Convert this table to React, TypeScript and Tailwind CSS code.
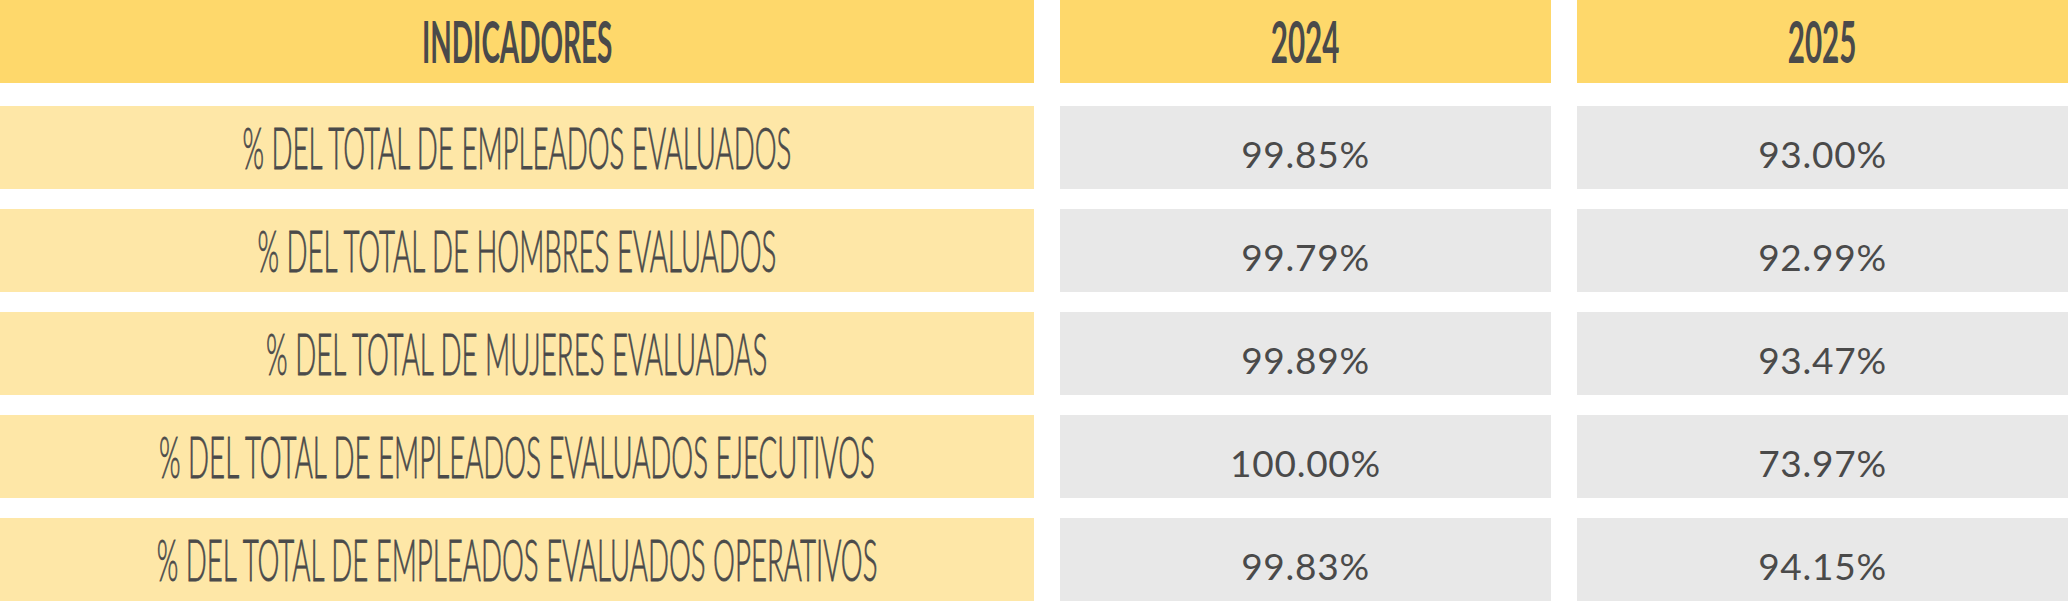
const rows = [
  { label: "% DEL TOTAL DE EMPLEADOS EVALUADOS", y2024: "99.85%", y2025: "93.00%" },
  { label: "% DEL TOTAL DE HOMBRES EVALUADOS", y2024: "99.79%", y2025: "92.99%" },
  { label: "% DEL TOTAL DE MUJERES EVALUADAS", y2024: "99.89%", y2025: "93.47%" },
  { label: "% DEL TOTAL DE EMPLEADOS EVALUADOS EJECUTIVOS", y2024: "100.00%", y2025: "73.97%" },
  { label: "% DEL TOTAL DE EMPLEADOS EVALUADOS OPERATIVOS", y2024: "99.83%", y2025: "94.15%" },
];

const cond = "font-['Lato',sans-serif] text-[57px] leading-none whitespace-nowrap inline-block";

function HeaderCell({ children, wide }: { children: string; wide?: boolean }) {
  return (
    <div className="h-[83px] bg-[#fed86b] flex items-center justify-center overflow-hidden">
      <span className={`${cond} font-bold ${wide ? "scale-x-[0.49]" : "scale-x-[0.52]"}`}>{children}</span>
    </div>
  );
}

function ValueCell({ value }: { value: string }) {
  return (
    <div className="h-[83px] bg-[#e8e8e8] flex items-center justify-center pt-[12px]">
      <span className="font-['Lato',sans-serif] text-[37px] leading-none tracking-[0.02em]">{value}</span>
    </div>
  );
}

export default function App() {
  return (
    <div className="w-[2072px] h-[606px] bg-white text-[#4a4a4a] overflow-hidden">
      <div className="grid grid-cols-[1034px_491px_491px] gap-x-[26px]">
        <HeaderCell wide>INDICADORES</HeaderCell>
        <HeaderCell>2024</HeaderCell>
        <HeaderCell>2025</HeaderCell>
      </div>

      <div className="mt-[23px] flex flex-col gap-[20px]">
        {rows.map((r) => (
          <div key={r.label} className="grid grid-cols-[1034px_491px_491px] gap-x-[26px]">
            <div className="h-[83px] bg-[#fee7a7] flex items-center justify-center overflow-hidden">
              <span className={`${cond} font-light scale-x-[0.485] [-webkit-text-stroke:0.8px_#4a4a4a]`}>
                {r.label}
              </span>
            </div>
            <ValueCell value={r.y2024} />
            <ValueCell value={r.y2025} />
          </div>
        ))}
      </div>
    </div>
  );
}
